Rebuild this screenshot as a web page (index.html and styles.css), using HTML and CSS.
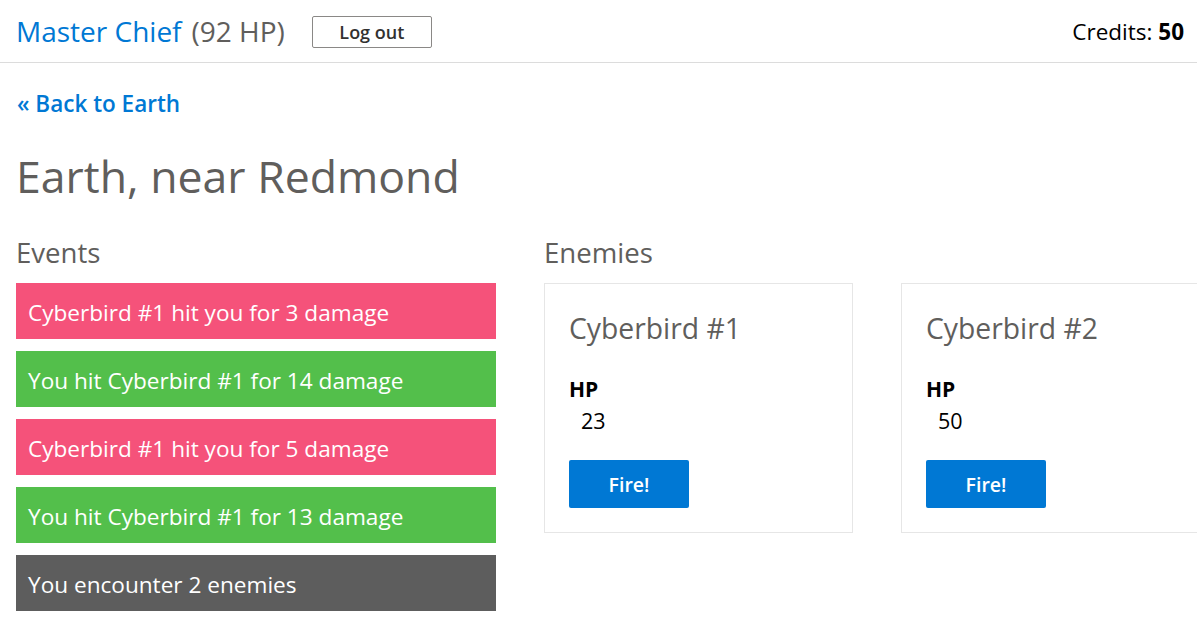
FILE: index.html
```html
<!DOCTYPE html>
<html lang="en">
<head>
<meta charset="utf-8">
<title>Earth, near Redmond</title>
<link rel="stylesheet" href="styles.css">
</head>
<body>
<header class="topbar">
  <div class="player">
    <span class="player-name">Master Chief</span>
    <span class="player-hp">(92 HP)</span>
    <button class="btn-default">Log out</button>
  </div>
  <div class="credits">Credits: <strong>50</strong></div>
</header>
<main class="page">
  <a class="back-link" href="#">« Back to Earth</a>
  <h1 class="title">Earth, near Redmond</h1>
  <div class="columns">
    <section class="events">
      <h2 class="section-title">Events</h2>
      <ul class="event-list">
        <li class="event event-bad">Cyberbird #1 hit you for 3 damage</li>
        <li class="event event-good">You hit Cyberbird #1 for 14 damage</li>
        <li class="event event-bad">Cyberbird #1 hit you for 5 damage</li>
        <li class="event event-good">You hit Cyberbird #1 for 13 damage</li>
        <li class="event event-neutral">You encounter 2 enemies</li>
      </ul>
    </section>
    <section class="enemies">
      <h2 class="section-title">Enemies</h2>
      <div class="enemy-list">
        <div class="card">
          <h3 class="card-title">Cyberbird #1</h3>
          <dl class="stat">
            <dt>HP</dt>
            <dd>23</dd>
          </dl>
          <button class="btn-primary">Fire!</button>
        </div>
        <div class="card">
          <h3 class="card-title">Cyberbird #2</h3>
          <dl class="stat">
            <dt>HP</dt>
            <dd>50</dd>
          </dl>
          <button class="btn-primary">Fire!</button>
        </div>
      </div>
    </section>
  </div>
</main>
</body>
</html>
```

FILE: styles.css
```css
* { box-sizing: border-box; }
html, body {
  margin: 0;
  padding: 0;
  overflow: hidden;
  background: #ffffff;
}
body {
  font-family: "Open Sans", "Noto Sans", sans-serif;
  color: #000;
  width: 1197px;
  height: 640px;
}
.topbar {
  height: 63px;
  border-bottom: 1px solid #dcdcdc;
  display: flex;
  align-items: center;
  justify-content: space-between;
  padding: 0 13px 0 16px;
}
.player {
  display: flex;
  align-items: center;
  font-size: 28px;
  line-height: 36px;
}
.player-name { color: #0078d4; }
.player-hp { color: #605e5c; margin-left: 10px; }
.btn-default {
  margin-left: 27px;
  width: 120px;
  height: 32px;
  border: 1px solid #8a8886;
  border-radius: 2px;
  background: #fff;
  color: #323130;
  font-family: inherit;
  font-size: 18px;
  font-weight: 600;
  padding: 0;
  margin-top: 2px;
}
.credits {
  font-size: 22.5px;
  color: #000;
}
.credits strong { font-weight: 700; }
.page {
  padding: 26px 0 0 16px;
}
.back-link {
  display: block;
  font-size: 22.5px;
  line-height: 30px;
  font-weight: 600;
  color: #0078d4;
  text-decoration: none;
  padding-left: 1px;
}
.title {
  margin: 27px 0 0;
  font-size: 44.6px;
  line-height: 60px;
  font-weight: 400;
  color: #605e5c;
  padding-left: 0;
}
.columns {
  display: flex;
  gap: 48px;
  margin-top: 28px;
}
.events { width: 480px; flex: none; }
.section-title {
  margin: 0 0 13px;
  font-size: 27.6px;
  line-height: 36px;
  font-weight: 400;
  color: #605e5c;
  padding-left: 0;
}
.event-list {
  list-style: none;
  margin: 0;
  padding: 0;
  display: flex;
  flex-direction: column;
  gap: 12px;
}
.event {
  height: 56px;
  display: flex;
  align-items: center;
  padding: 2px 0 0 12px;
  color: #fff;
  font-size: 22.6px;
}
.event-bad { background: #f5527a; }
.event-good { background: #53bf4b; }
.event-neutral { background: #5d5d5d; }
.enemies { flex: none; }
.enemy-list {
  display: flex;
  gap: 48px;
}
.card {
  width: 309px;
  height: 250px;
  border: 1px solid #e6e6e6;
  padding: 24px 24px 0;
  flex: none;
}
.card-title {
  margin: 0;
  font-size: 28.3px;
  line-height: 40px;
  font-weight: 400;
  color: #605e5c;
}
.stat {
  margin: 26px 0 0;
}
.stat dt {
  font-size: 21px;
  line-height: 30px;
  font-weight: 700;
}
.stat dd {
  margin: 2px 0 0 12px;
  font-size: 21.5px;
  line-height: 30px;
}
.btn-primary {
  margin-top: 24px;
  width: 120px;
  height: 48px;
  border: none;
  border-radius: 2px;
  background: #0078d4;
  color: #fff;
  font-family: inherit;
  font-size: 19.5px;
  font-weight: 600;
  padding: 0;
}
```
